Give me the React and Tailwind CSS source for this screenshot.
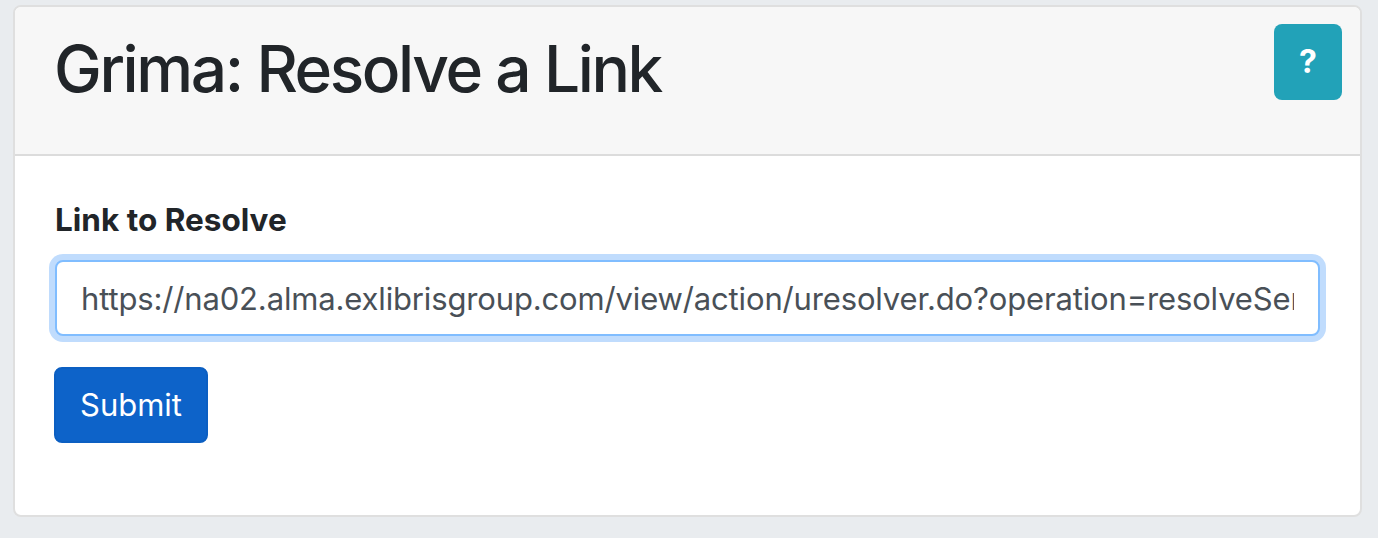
import React from 'react';

const LINK =
    'https://na02.alma.exlibrisgroup.com/view/action/uresolver.do?operation=resolveService&package_service_id=5678901234567890&institutionId=1234&customerId=1230';

const App = () => {
    return (
        <div className="min-h-[538px] bg-[#e9ecef] pt-[5px] pl-[13px] pr-[16px]" style={{ fontFamily: 'Inter, "Noto Sans", sans-serif' }}>
            <div className="bg-white border-2 border-[#dfdfdf] rounded-[8px] overflow-hidden">
                <div className="flex justify-between items-start h-[149px] bg-[#f7f7f7] border-b-2 border-[#dcdcdc] pl-[39px] pr-[17px]">
                    <h1 className="pt-[23px] text-[64px] leading-[77px] font-medium text-[#212529] tracking-[-2.4px]">
                        Grima: Resolve a Link
                    </h1>
                    <button className="mt-[17px] mr-[1px] w-[68px] h-[76px] rounded-[8px] bg-[#22a2b8] text-white text-[32px] font-bold flex items-center justify-center">
                        ?
                    </button>
                </div>
                <div className="h-[359px] px-[40px] pt-[40px]">
                    <form onSubmit={(e) => e.preventDefault()}>
                        <label className="block text-[31.5px] leading-[48px] font-bold text-[#212529] mb-[16px]">
                            Link to Resolve
                        </label>
                        <input
                            readOnly
                            value={LINK}
                            className="block w-full h-[76px] px-[24px] border-2 border-[#80bdff] rounded-[8px] text-[31px] tracking-[-0.15px] text-[#495057] bg-white shadow-[0_0_0_6px_#c0dcfd] outline-none"
                        />
                        <button
                            type="submit"
                            className="mt-[31px] -ml-[1px] h-[76px] px-[24px] rounded-[8px] bg-[#0d63c9] border-2 border-[#0c5fc2] text-white text-[31px]"
                        >
                            Submit
                        </button>
                    </form>
                </div>
            </div>
        </div>
    );
};

export default App;
